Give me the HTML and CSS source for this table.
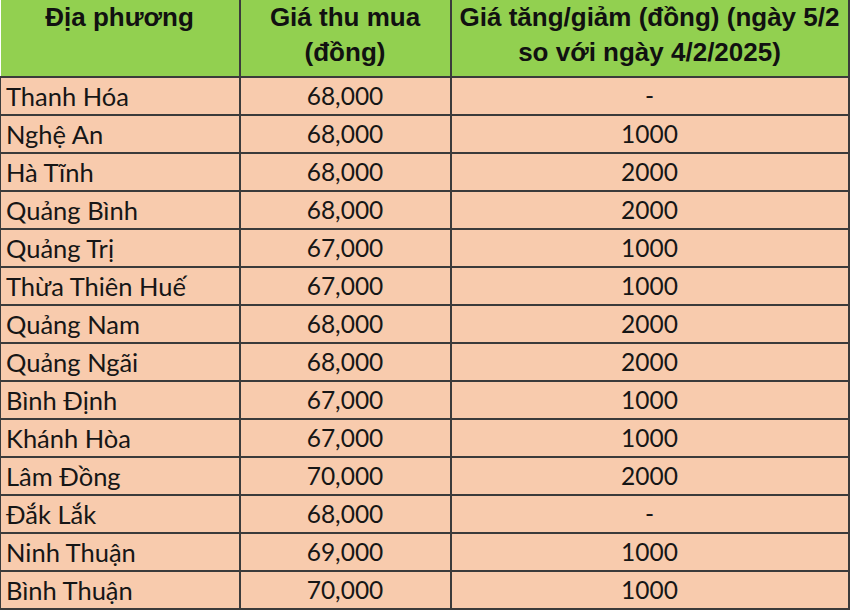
FILE: index.html
```html
<!DOCTYPE html>
<html lang="vi">
<head>
<meta charset="utf-8">
<link rel="stylesheet" href="styles.css">
</head>
<body>
<table class="price-table">
  <colgroup>
    <col class="c1"><col class="c2"><col class="c3">
  </colgroup>
  <thead>
    <tr class="head-row">
      <th>Địa phương</th>
      <th>Giá thu mua<br>(đồng)</th>
      <th>Giá tăng/giảm (đồng) (ngày 5/2<br>so với ngày 4/2/2025)</th>
    </tr>
  </thead>
  <tbody>
    <tr><td class="name">Thanh Hóa</td><td class="num">68,000</td><td class="num">-</td></tr>
    <tr><td class="name">Nghệ An</td><td class="num">68,000</td><td class="num">1000</td></tr>
    <tr><td class="name">Hà Tĩnh</td><td class="num">68,000</td><td class="num">2000</td></tr>
    <tr><td class="name">Quảng Bình</td><td class="num">68,000</td><td class="num">2000</td></tr>
    <tr><td class="name">Quảng Trị</td><td class="num">67,000</td><td class="num">1000</td></tr>
    <tr><td class="name">Thừa Thiên Huế</td><td class="num">67,000</td><td class="num">1000</td></tr>
    <tr><td class="name">Quảng Nam</td><td class="num">68,000</td><td class="num">2000</td></tr>
    <tr><td class="name">Quảng Ngãi</td><td class="num">68,000</td><td class="num">2000</td></tr>
    <tr><td class="name">Bình Định</td><td class="num">67,000</td><td class="num">1000</td></tr>
    <tr><td class="name">Khánh Hòa</td><td class="num">67,000</td><td class="num">1000</td></tr>
    <tr><td class="name">Lâm Đồng</td><td class="num">70,000</td><td class="num">2000</td></tr>
    <tr><td class="name">Đắk Lắk</td><td class="num">68,000</td><td class="num">-</td></tr>
    <tr><td class="name">Ninh Thuận</td><td class="num">69,000</td><td class="num">1000</td></tr>
    <tr><td class="name">Bình Thuận</td><td class="num">70,000</td><td class="num">1000</td></tr>
  </tbody>
</table>
</body>
</html>
```

FILE: styles.css
```css
html, body {
  margin: 0;
  padding: 0;
  background: #ffffff;
}

.price-table {
  border-collapse: collapse;
  table-layout: fixed;
  width: 848px;
}

.c1 { width: 239px; }
.c2 { width: 211px; }
.c3 { width: 398px; }

.head-row {
  height: 77px;
}

.price-table th {
  background: #92d050;
  color: #111;
  font-family: "Liberation Sans", Arial, sans-serif;
  font-weight: bold;
  font-size: 26px;
  line-height: 35px;
  padding: 0;
  vertical-align: top;
  text-align: center;
  white-space: nowrap;
  border: 2px solid #3b3b3b;
  border-top: none;
  border-left: none;
}

.price-table tbody tr {
  height: 38px;
}

.price-table td {
  background: #f8cbad;
  color: #161616;
  font-family: Lato, "Open Sans", sans-serif;
  font-size: 25.5px;
  line-height: 30px;
  padding: 0 5px;
  border: 2px solid #3b3b3b;
  vertical-align: middle;
}

.price-table td.name {
  text-align: left;
  border-left: 1px solid #3b3b3b;
}

.price-table td.num {
  text-align: center;
  font-size: 24.5px;
}
```
